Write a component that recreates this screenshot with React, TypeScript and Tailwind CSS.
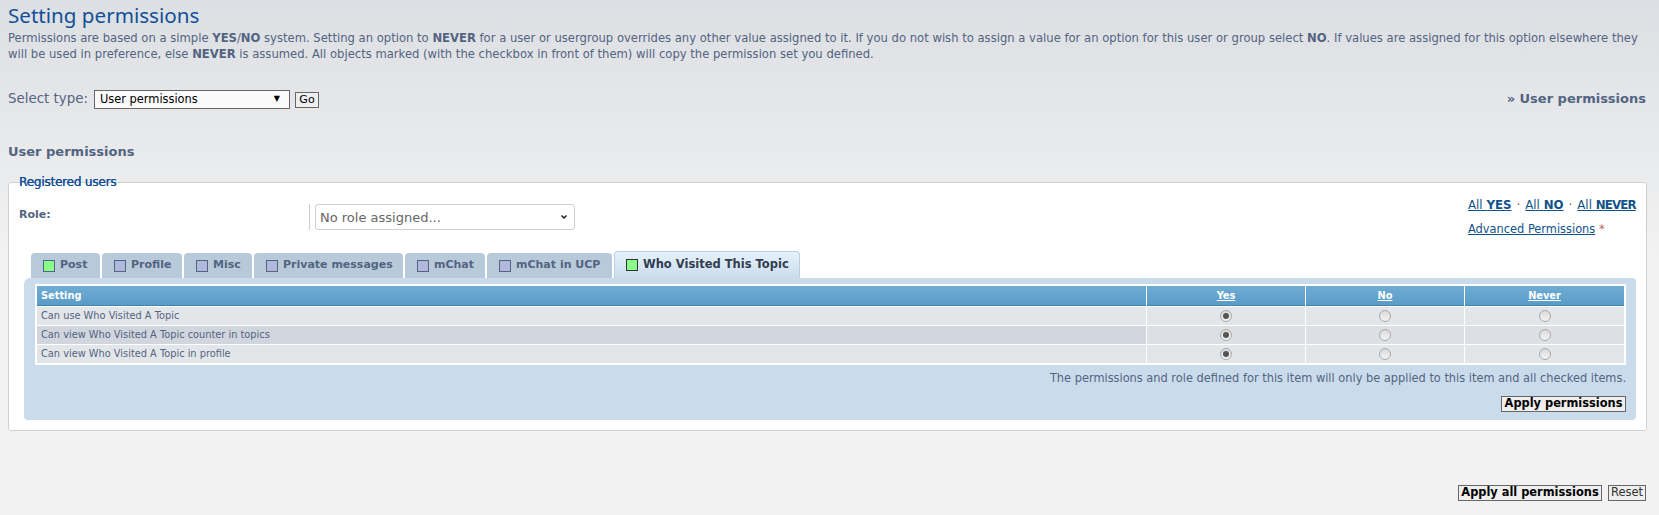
import React from "react";

const font = { fontFamily: '"DejaVu Sans", Verdana, sans-serif' };

const tabs = [
  { name: "Post", set: true, w: "w-[69px]" },
  { name: "Profile", set: false, w: "w-[80px]" },
  { name: "Misc", set: false, w: "w-[68px]" },
  { name: "Private messages", set: false, w: "w-[149px]" },
  { name: "mChat", set: false, w: "w-[80px]" },
  { name: "mChat in UCP", set: false, w: "w-[125px]" },
];

const rows = [
  { label: "Can use Who Visited A Topic", hover: false },
  { label: "Can view Who Visited A Topic counter in topics", hover: true },
  { label: "Can view Who Visited A Topic in profile", hover: false },
];

function Radio({ checked }: { checked?: boolean }) {
  return (
    <span className="flex h-[12px] w-[12px] items-center justify-center rounded-full border border-[#a9a9a9] bg-gradient-to-b from-[#d9d9d9] to-[#f4f4f4]">
      {checked && <span className="h-[6px] w-[6px] rounded-full bg-[#555555]" />}
    </span>
  );
}

function Swatch({ on, dark }: { on: boolean; dark?: boolean }) {
  return (
    <span
      className={`h-[12px] w-[12px] shrink-0 border ${dark ? "border-[#333333]" : "border-[#536482]"} ${on ? "bg-[#88ff88]" : "bg-[#b0b8dc]"}`}
    />
  );
}

function PermButton({ children, bold, className }: { children: React.ReactNode; bold?: boolean; className: string }) {
  return (
    <button
      className={`h-[16px] border border-[#666666] bg-[#efefef] text-center leading-none ${className} ${bold ? "text-[11.4px] font-bold text-black" : "text-[11.5px] text-[#333333]"}`}
    >
      {children}
    </button>
  );
}

export default function App() {
  return (
    <div
      style={font}
      className="h-[515px] overflow-hidden bg-[#f2f2f2] bg-gradient-to-b from-[#dcdfe3] to-[#f2f2f2] bg-[length:100%_260px] bg-no-repeat pl-2 pr-[13px] text-[11px] text-[#536482]"
    >
      <h1
        style={{ fontFamily: '"Noto Sans", sans-serif' }}
        className="pt-[2px] pb-[1px] text-[20.6px] leading-[26px] text-[#115098]"
      >
        Setting permissions
      </h1>
      <p className="mt-[1px] text-[11.6px] leading-[16px]">
        Permissions are based on a simple <b>YES</b>/<b>NO</b> system. Setting an option to <b>NEVER</b> for a user or
        usergroup overrides any other value assigned to it. If you do not wish to assign a value for an option for this
        user or group select <b>NO</b>. If values are assigned for this option elsewhere they will be used in
        preference, else <b>NEVER</b> is assumed. All objects marked (with the checkbox in front of them) will copy the
        permission set you defined.
      </p>

      <div className="mt-[28px] flex h-[19px] items-center">
        <span className="w-[86px] text-[13.4px]">Select type:</span>
        <div className="relative h-[19px] w-[196px] border border-[#666666] bg-[#fafafa] pl-[5px] text-[11.4px] leading-[17px] text-black">
          User permissions
          <span className="absolute right-[9px] top-[1px] text-[8px] leading-[14px]">▼</span>
        </div>
        <button className="ml-[5px] h-[16px] w-[24px] border border-[#666666] bg-[#efefef] text-[11px] leading-none text-black">
          Go
        </button>
        <b className="ml-auto -translate-y-px text-[13px] text-[#536482]">» User permissions</b>
      </div>

      <h2 className="mt-[34px] text-[13px] font-bold leading-[18px]">User permissions</h2>

      <fieldset className="relative mt-[21px] h-[249px] rounded-[3px] border border-[#d0d0d0] bg-white pl-[15px] pr-[10px]">
        <legend className="absolute -top-[9px] left-[10px] text-[12px] leading-[16px] tracking-[-0.2px] text-[#115098] [text-shadow:0.3px_0_0_#115098]">
          Registered users
        </legend>

        <div className="flex h-[68px] pt-[21px]">
          <b className="-ml-[5px] mt-[3px] w-[290px] text-[11px] leading-[16px]">Role:</b>
          <div className="h-[26px] border-l border-[#cccccc] pl-[5px]">
            <div className="relative flex h-[26px] w-[260px] items-center rounded-[3px] border border-[#d0d0d0] pl-[4px] pt-px text-[13px] text-[#666666]">
              No role assigned...
              <svg className="absolute right-[7px] top-[10px] h-[4px] w-[6px]" viewBox="0 0 6 4">
                <polyline points="0.5,0.5 3,3 5.5,0.5" fill="none" stroke="#222222" strokeWidth="1.5" />
              </svg>
            </div>
          </div>
          <div className="ml-auto w-[168px] text-[#105289]">
            <div className="-mt-[7px] whitespace-nowrap text-[11.8px] leading-[16px]">
              <span className="underline">
                All <b>YES</b>
              </span>
              <span className="mx-[5px] text-[#536482]">·</span>
              <span className="underline">
                All <b>NO</b>
              </span>
              <span className="mx-[5px] text-[#536482]">·</span>
              <span className="underline">
                All <b className="tracking-[-0.8px]">NEVER</b>
              </span>
            </div>
            <div className="mt-[8px] text-[11.4px] leading-[16px]">
              <span className="underline">Advanced Permissions</span>
              <span className="text-[#bc6a6a]"> *</span>
            </div>
          </div>
        </div>

        <div className="flex h-[27px] items-end gap-[2px] pl-[7px]">
          {tabs.map((tab) => (
            <div
              key={tab.name}
              className={`flex h-[25px] ${tab.w} items-center gap-[5px] rounded-t-[4px] bg-[#b8cad9] pl-[12px] text-[11px] font-bold`}
            >
              <Swatch on={tab.set} />
              {tab.name}
            </div>
          ))}
          <div className="flex h-[27px] w-[186px] items-center gap-[5px] rounded-t-[4px] border-x border-t border-[#bccde0] bg-gradient-to-b from-[#e6f2fd] to-[#cadceb] pl-[11px] text-[11.5px] font-bold text-[#323d4f]">
            <Swatch on dark />
            Who Visited This Topic
          </div>
        </div>

        <div className="h-[142px] w-[1612px] rounded-[4px] rounded-tl-[6px] bg-[#cadceb] px-[10px] pt-[6px]">
          <div className="ml-[1px] grid grid-cols-[1fr_158px_158px_159px] gap-px border-2 border-white bg-white text-[9.8px]">
            <div className="flex h-[20px] items-center border-b border-[#3d84b0] bg-gradient-to-b from-[#6eacd4] to-[#5a9cc7] pl-[4px] pt-px font-bold text-white">
              Setting
            </div>
            {["Yes", "No", "Never"].map((h) => (
              <div
                key={h}
                className="flex h-[20px] items-center justify-center border-b border-[#3d84b0] bg-gradient-to-b from-[#6eacd4] to-[#5a9cc7] pt-px font-bold text-white underline"
              >
                {h}
              </div>
            ))}
            {rows.map((row) => (
              <React.Fragment key={row.label}>
                <div className={`flex h-[18px] items-center pl-[4px] ${row.hover ? "bg-[#d1d5dd]" : "bg-[#e3e6e9]"}`}>
                  {row.label}
                </div>
                {[true, false, false].map((checked, i) => (
                  <div
                    key={i}
                    className={`flex h-[18px] items-center justify-center ${row.hover ? "bg-[#dcdfe3]" : "bg-[#e3e6e9]"}`}
                  >
                    <Radio checked={checked} />
                  </div>
                ))}
              </React.Fragment>
            ))}
          </div>
          <p className="mt-[6px] text-right text-[11.38px] leading-[14px]">
            The permissions and role defined for this item will only be applied to this item and all checked items.
          </p>
          <div className="mt-[11px] flex justify-end">
            <PermButton bold className="w-[125px]">
              Apply permissions
            </PermButton>
          </div>
        </div>
      </fieldset>

      <div className="mt-[54px] flex justify-end gap-[6px]">
        <PermButton bold className="w-[144px]">
          Apply all permissions
        </PermButton>
        <PermButton className="w-[38px]">Reset</PermButton>
      </div>
    </div>
  );
}
